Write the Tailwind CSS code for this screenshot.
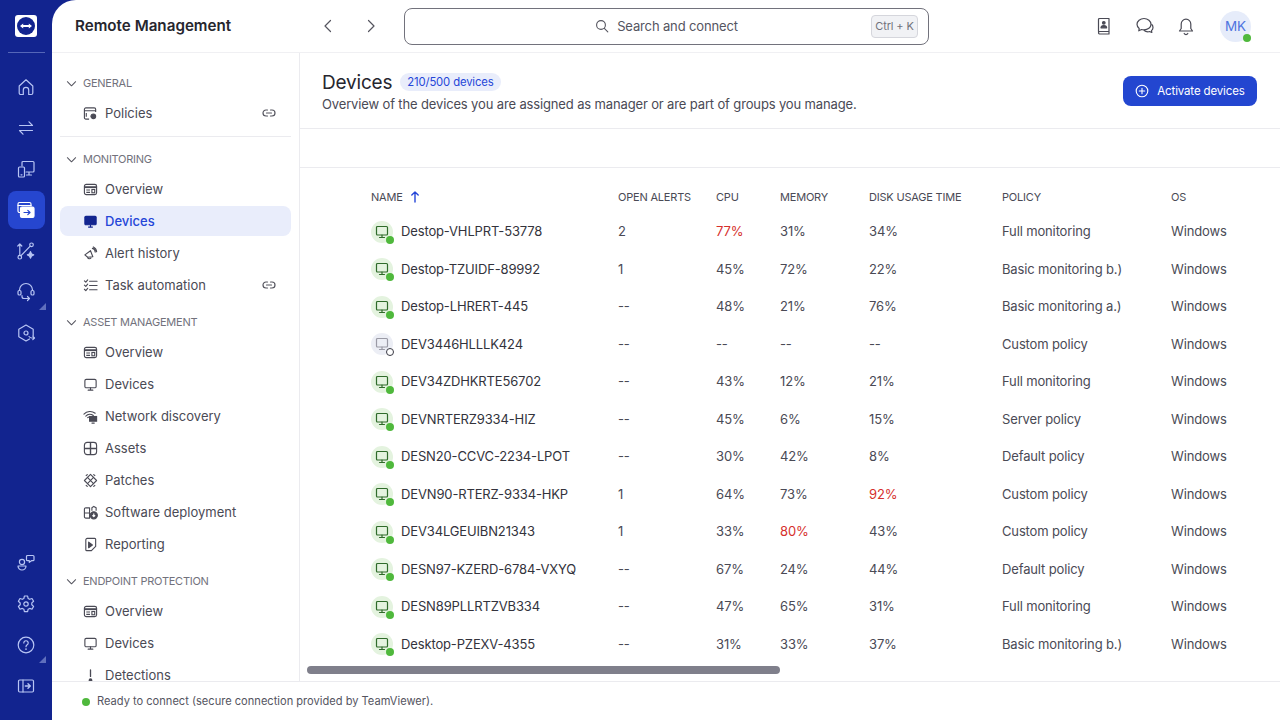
<!DOCTYPE html>
<html lang="en">
<head>
    <meta charset="UTF-8">
    <meta name="viewport" content="width=device-width, initial-scale=1.0">
    <title>Remote Management - Devices</title>
    <script src="https://cdn.jsdelivr.net/npm/@tailwindcss/browser@4"></script>
</head>
<body class="bg-[#12248f] h-screen overflow-hidden flex font-[Inter,sans-serif] text-[13px] tracking-[-0.14px] text-[#4a4a55]">

    <!-- icon rail -->
    <nav class="w-[52px] shrink-0 h-full flex flex-col items-center pt-[15px] pb-[15px] text-[#b8c5f4]">
        <div class="w-[22px] h-[22px] bg-white rounded-[3px] flex items-center justify-center">
            <svg width="18" height="18" viewBox="0 0 18 18"><circle cx="9" cy="9" r="9" fill="#12248f"/><path d="M3 9l3.2-2.6v1.7h5.6V6.4L15 9l-3.2 2.6V9.9H6.2v1.7z" fill="#fff"/></svg>
        </div>
        <div class="w-[37px] h-px bg-[#5566b8] mt-[15px] mb-[15px]"></div>
        <div class="flex flex-col gap-[3px]">
            <a class="w-[37px] h-[38px] flex items-center justify-center">
                <svg width="20" height="20" viewBox="0 0 20 20" fill="none" stroke="currentColor" stroke-width="1.2" stroke-linejoin="round"><path d="M3.2 9 10 2.8 16.8 9v7a1.5 1.5 0 0 1-1.5 1.5h-2.6V13a2.7 2.7 0 0 0-5.4 0v4.5H4.7A1.5 1.5 0 0 1 3.2 16z"/></svg>
            </a>
            <a class="w-[37px] h-[38px] flex items-center justify-center">
                <svg width="20" height="20" viewBox="0 0 20 20" fill="none" stroke="currentColor" stroke-width="1.2" stroke-linecap="round" stroke-linejoin="round"><path d="M3.5 7.5h13L13 3.8M16.5 12.5h-13L7 16.2"/></svg>
            </a>
            <a class="w-[37px] h-[38px] flex items-center justify-center">
                <svg width="20" height="20" viewBox="0 0 20 20" fill="none" stroke="currentColor" stroke-width="1.2" stroke-linecap="round" stroke-linejoin="round"><path d="M6 7V3.5a1 1 0 0 1 1-1h10a1 1 0 0 1 1 1V12a1 1 0 0 1-1 1h-7M13 13v3M10.5 16h5"/><rect x="2.5" y="8" width="6" height="10" rx="1"/><path d="M5 15.800h1"/></svg>
            </a>
            <a class="w-[37px] h-[38px] flex items-center justify-center bg-[#2646cf] rounded-lg text-white">
                <svg width="20" height="20" viewBox="0 0 20 20" fill="none" stroke="currentColor" stroke-width="1.2" stroke-linecap="round" stroke-linejoin="round"><path d="M4 12.5h-.5A1.5 1.5 0 0 1 2 11V4a1.5 1.5 0 0 1 1.500-1.500h10A1.5 1.5 0 0 1 15 4v2"/><path d="M2 5.5h13"/><rect x="4.5" y="7" width="13.5" height="10.5" rx="1.5" fill="currentColor"/><path d="M8 12.5h6M11.8 10.3l2.2 2.2-2.2 2.2" stroke="#2646cf"/></svg>
            </a>
            <a class="w-[37px] h-[38px] flex items-center justify-center">
                <svg width="20" height="20" viewBox="0 0 20 20" fill="none" stroke="currentColor" stroke-width="1.2" stroke-linecap="round" stroke-linejoin="round"><circle cx="3.8" cy="16.2" r="1.8"/><circle cx="15.5" cy="3.8" r="1.8"/><path d="M5 14.7 14.2 5.2M3.8 14V3M1.8 5l2-2 2 2"/><path d="M14.5 10.5c.4 2.3 1 2.9 3.2 3.300-2.200.4-2.800 1-3.200 3.300-.4-2.300-1-2.900-3.200-3.300 2.200-.4 2.800-1 3.200-3.300z" fill="currentColor"/></svg>
            </a>
            <a class="relative w-[37px] h-[38px] flex items-center justify-center">
                <svg width="20" height="20" viewBox="0 0 20 20" fill="none" stroke="currentColor" stroke-width="1.2" stroke-linecap="round" stroke-linejoin="round"><path d="M3.5 8.5V8a6.5 6.5 0 0 1 13 0v.5"/><rect x="2" y="8.5" width="3" height="4.5" rx="1.3"/><rect x="15" y="8.5" width="3" height="4.5" rx="1.3"/><path d="M6 13.5v1a2 2 0 0 0 2 2h5.500M11.500 14.500l2 2-2 2"/></svg>
                <span class="absolute right-[-1px] bottom-[1px] w-0 h-0 border-l-[7px] border-l-transparent border-b-[7px] border-b-[#5f6fbd]"></span>
            </a>
            <a class="w-[37px] h-[38px] flex items-center justify-center">
                <svg width="20" height="20" viewBox="0 0 20 20" fill="none" stroke="currentColor" stroke-width="1.2" stroke-linecap="round" stroke-linejoin="round"><path d="M17.2 12.5V6.2L10 2 2.8 6.2v7.6L10 18l3.500-2"/><circle cx="10" cy="10" r="2"/><path d="M13 13.5c.8 1 1.700 1.500 2.800 1.500H18M16.800 13.200 18.500 15l-1.700 1.600"/></svg>
            </a>
        </div>
        <div class="mt-auto flex flex-col gap-[3px]">
            <a class="w-[37px] h-[38px] flex items-center justify-center">
                <svg width="20" height="20" viewBox="0 0 20 20" fill="none" stroke="currentColor" stroke-width="1.2" stroke-linecap="round" stroke-linejoin="round"><circle cx="6" cy="9" r="2.6"/><path d="M2 13h8a4 4 0 0 1-8 0z"/><path d="M10.5 3.5a1 1 0 0 1 1-1H17a1 1 0 0 1 1 1v3.2a1 1 0 0 1-1 1h-1.500l-2.200 1.600V7.700h-1.800a1 1 0 0 1-1-1z"/></svg>
            </a>
            <a class="w-[37px] h-[38px] flex items-center justify-center">
                <svg width="20" height="20" viewBox="0 0 20 20" fill="none" stroke="currentColor" stroke-width="1.2" stroke-linejoin="round"><path d="M8.4 2h3.2l.5 2.4 1.6.9 2.300-.8 1.600 2.800-1.800 1.600v1.900l1.800 1.600-1.600 2.800-2.300-.8-1.600.9-.5 2.400H8.400l-.5-2.400-1.600-.9-2.300.8-1.600-2.800 1.800-1.600V9L2.400 7.300 4 4.500l2.300.8 1.600-.9z"/><circle cx="10" cy="10" r="2.2"/></svg>
            </a>
            <a class="relative w-[37px] h-[38px] flex items-center justify-center">
                <svg width="20" height="20" viewBox="0 0 20 20" fill="none" stroke="currentColor" stroke-width="1.2" stroke-linecap="round"><circle cx="10" cy="10" r="7.8"/><path d="M7.8 7.900a2.200 2.200 0 1 1 3.400 1.900c-.8.5-1.200 1-1.200 1.900"/><path d="M10 14.100v.1" stroke-width="1.6"/></svg>
                <span class="absolute right-[-1px] bottom-[1px] w-0 h-0 border-l-[7px] border-l-transparent border-b-[7px] border-b-[#5f6fbd]"></span>
            </a>
            <a class="w-[37px] h-[38px] flex items-center justify-center">
                <svg width="20" height="20" viewBox="0 0 20 20" fill="none" stroke="currentColor" stroke-width="1.2" stroke-linecap="round" stroke-linejoin="round"><rect x="2.5" y="4" width="15" height="12" rx="1.2"/><path d="M7 4v12"/><path d="M9.3 10h5M12 7.800l2.300 2.200-2.300 2.200" stroke-width="1.4"/></svg>
            </a>
        </div>
    </nav>

    <div class="flex-1 min-w-0 h-full flex flex-col bg-white rounded-tl-[24px]">

        <!-- top bar -->
        <header class="h-[53px] shrink-0 flex items-center border-b border-[#f0f0f3]">
            <div class="w-[248px] shrink-0 pl-[23px] text-[15.2px] tracking-normal font-semibold text-[#26262e]">Remote Management</div>
            <button class="w-[56px] flex justify-center">
                <svg width="16" height="16" viewBox="0 0 16 16" fill="none" stroke="#55555f" stroke-width="1.2" stroke-linecap="round" stroke-linejoin="round"><path d="M10.5 2.5 5 8l5.500 5.500"/></svg>
            </button>
            <button class="w-[30px] flex justify-center">
                <svg width="16" height="16" viewBox="0 0 16 16" fill="none" stroke="#55555f" stroke-width="1.2" stroke-linecap="round" stroke-linejoin="round"><path d="M5.5 2.5 11 8l-5.500 5.500"/></svg>
            </button>
            <div class="relative ml-[18px] w-[525px] h-[37px] border border-[#72727c] rounded-lg flex items-center justify-center gap-[8px] text-[#55555f]">
                <svg width="14" height="14" viewBox="0 0 14 14" fill="none" stroke="#55555f" stroke-width="1.1" stroke-linecap="round"><circle cx="6" cy="6" r="4.4"/><path d="M9.3 9.3 12.8 12.8"/></svg>
                <span class="pt-[2px]">Search and connect</span>
                <span class="absolute right-[10px] top-[6px] w-[47px] h-[23px] bg-[#f1f2f5] border border-[#d5d6dc] rounded flex items-center justify-center text-[11px] text-[#72727c]">Ctrl + K</span>
            </div>
            <div class="ml-auto flex items-center mr-[29px]">
                <svg class="mr-[21px]" width="20" height="20" viewBox="0 0 20 20" fill="none" stroke="#4a4a55" stroke-width="1.2" stroke-linecap="round" stroke-linejoin="round"><path d="M4.5 15.5v-12a1 1 0 0 1 1-1H15v15.500H5.700a1.200 1.200 0 0 1-1.200-1.200 1.300 1.300 0 0 1 1.200-1.300H15"/><circle cx="9.8" cy="6.8" r="1.3" fill="#4a4a55"/><path d="M7 11.800c0-1.500 1.200-2.300 2.800-2.300s2.800.8 2.800 2.300z" fill="#4a4a55"/></svg>
                <svg class="mr-[21px]" width="20" height="20" viewBox="0 0 20 20" fill="none" stroke="#4a4a55" stroke-width="1.2" stroke-linecap="round" stroke-linejoin="round"><path d="M9 2.5c-3.800 0-7 2.500-7 5.800 0 1.700.9 3.200 2.200 4.200l-.4 2.300 2.800-1.300c.8.3 1.600.4 2.400.4 3.800 0 7-2.400 7-5.600S12.800 2.500 9 2.500z"/><path d="M16.800 8.500c.8.8 1.200 1.800 1.200 2.900 0 1.300-.6 2.400-1.500 3.200l.3 1.900-2.200-1c-.6.2-1.200.3-1.800.3-1.400 0-2.700-.5-3.500-1.300"/></svg>
                <svg class="mr-[24px]" width="20" height="20" viewBox="0 0 20 20" fill="none" stroke="#4a4a55" stroke-width="1.2" stroke-linecap="round" stroke-linejoin="round"><path d="M3.5 15h13l-1.700-2.500V8a4.800 4.800 0 0 0-9.600 0v4.500z"/><path d="M8.200 17.500a2 2 0 0 0 3.600 0"/></svg>
                <div class="relative w-[31px] h-[31px] rounded-full bg-[#e6ecfa] text-[#4f74e0] text-[13.5px] flex items-center justify-center">MK
                    <span class="absolute right-[0px] bottom-[0px] w-[8px] h-[8px] rounded-full bg-[#4fb83c]"></span>
                </div>
            </div>
        </header>

        <div class="flex-1 min-h-0 flex">

            <!-- section sidebar -->
            <aside class="w-[248px] shrink-0 overflow-hidden border-r border-[#ebebef] pt-[18px] px-[8px] tracking-normal">
                <div class="h-[24px] mb-[2px] flex items-center pl-[6px] gap-[6px] text-[11px] tracking-[-0.25px] text-[#72727c]">
                    <svg width="11" height="11" viewBox="0 0 12 12" fill="none" stroke="#55555f" stroke-width="1.1" stroke-linecap="round" stroke-linejoin="round"><path d="M1.5 4 6 8.500 10.500 4"/></svg>GENERAL
                </div>
                <a class="h-[32px] flex items-center pl-[23px] gap-[7px]">
                    <svg width="15" height="15" viewBox="0 0 16 16" fill="none" stroke="#4a4a55" stroke-width="1.2" stroke-linejoin="round"><path d="M6.5 14H3a1.500 1.500 0 0 1-1.500-1.500v-9A1.500 1.500 0 0 1 3 2h9a1.500 1.500 0 0 1 1.500 1.500v3M1.500 5h12"/><circle cx="11" cy="11" r="2.5" fill="#4a4a55"/><path d="M3.500 7.500v4"/></svg>
                    <span class="pt-[2px]">Policies</span>
                    <svg class="ml-auto mr-[15px]" width="14" height="14" viewBox="0 0 14 14" fill="none" stroke="#55555f" stroke-width="1.2" stroke-linecap="round"><path d="M5.5 4H4a3 3 0 0 0 0 6h1.500M8.500 4H10a3 3 0 0 1 0 6H8.500M4.500 7h5"/></svg>
                </a>
                <div class="border-t border-[#ebebef] mt-[7px] mb-[10px]"></div>
                <div class="h-[24px] mb-[3px] flex items-center pl-[6px] gap-[6px] text-[11px] tracking-[-0.25px] text-[#72727c]">
                    <svg width="11" height="11" viewBox="0 0 12 12" fill="none" stroke="#55555f" stroke-width="1.1" stroke-linecap="round" stroke-linejoin="round"><path d="M1.5 4 6 8.500 10.500 4"/></svg>MONITORING
                </div>
                <a class="h-[30px] mb-[2px] flex items-center pl-[23px] gap-[7px]">
                    <svg width="15" height="15" viewBox="0 0 16 16" fill="none" stroke="#4a4a55" stroke-width="1.2"><rect x="1.5" y="2.5" width="13" height="11" rx="2"/><path d="M1.5 5.500h13" stroke-width="2"/><path d="M3.500 8.500h4M3.500 11h4"/><rect x="9.5" y="8" width="3" height="3.5"/></svg>
                    <span class="pt-[2px]">Overview</span>
                </a>
                <a class="h-[30px] mb-[2px] flex items-center pl-[23px] gap-[7px] bg-[#e9edfb] rounded-lg text-[#2546d8] font-medium">
                    <svg width="15" height="15" viewBox="0 0 16 16" fill="#12248f" stroke="#12248f" stroke-width="1.2" stroke-linejoin="round"><rect x="2" y="2.5" width="12" height="9" rx="1"/><path d="M5.500 14h5M8 11.500V14" fill="none"/></svg>
                    <span class="pt-[2px]">Devices</span>
                </a>
                <a class="h-[30px] mb-[2px] flex items-center pl-[23px] gap-[7px]">
                    <svg width="15" height="15" viewBox="0 0 16 16" fill="none" stroke="#4a4a55" stroke-width="1.2" stroke-linecap="round" stroke-linejoin="round"><path d="M2 9.500 8 5l2.500 6.500-5.500.5z"/><path d="M5 12.500a2 2 0 0 0 3.500.2M10 2.500a4 4 0 0 1 3 4M11 1a6 6 0 0 1 3.500 5"/></svg>
                    <span class="pt-[2px]">Alert history</span>
                </a>
                <a class="h-[30px] mb-[10px] flex items-center pl-[23px] gap-[7px]">
                    <svg width="15" height="15" viewBox="0 0 16 16" fill="none" stroke="#4a4a55" stroke-width="1.2" stroke-linecap="round" stroke-linejoin="round"><path d="M7 3.500h8M7 8h8M7 12.500h8M1.500 3 3 4.500 5 2M1.500 7.500 3 9l2-2.500M1.500 12 3 13.500 5 11"/></svg>
                    <span class="pt-[2px]">Task automation</span>
                    <svg class="ml-auto mr-[15px]" width="14" height="14" viewBox="0 0 14 14" fill="none" stroke="#55555f" stroke-width="1.2" stroke-linecap="round"><path d="M5.5 4H4a3 3 0 0 0 0 6h1.500M8.500 4H10a3 3 0 0 1 0 6H8.500M4.500 7h5"/></svg>
                </a>
                <div class="h-[24px] mb-[2px] flex items-center pl-[6px] gap-[6px] text-[11px] tracking-[-0.25px] text-[#72727c]">
                    <svg width="11" height="11" viewBox="0 0 12 12" fill="none" stroke="#55555f" stroke-width="1.1" stroke-linecap="round" stroke-linejoin="round"><path d="M1.5 4 6 8.500 10.500 4"/></svg>ASSET MANAGEMENT
                </div>
                <a class="h-[32px] flex items-center pl-[23px] gap-[7px]">
                    <svg width="15" height="15" viewBox="0 0 16 16" fill="none" stroke="#4a4a55" stroke-width="1.2"><rect x="1.5" y="2.5" width="13" height="11" rx="2"/><path d="M1.500 5.500h13" stroke-width="2"/><path d="M3.500 8.500h4M3.500 11h4"/><rect x="9.5" y="8" width="3" height="3.5"/></svg>
                    <span class="pt-[2px]">Overview</span>
                </a>
                <a class="h-[32px] flex items-center pl-[23px] gap-[7px]">
                    <svg width="15" height="15" viewBox="0 0 16 16" fill="none" stroke="#4a4a55" stroke-width="1.2" stroke-linejoin="round" stroke-linecap="round"><rect x="2" y="2.5" width="12" height="9" rx="1.5"/><path d="M5.500 14h5M8 11.500V14"/></svg>
                    <span class="pt-[2px]">Devices</span>
                </a>
                <a class="h-[32px] flex items-center pl-[23px] gap-[7px]">
                    <svg width="15" height="15" viewBox="0 0 16 16" fill="none" stroke="#4a4a55" stroke-width="1.2" stroke-linecap="round"><path d="M1 5.500a9 9 0 0 1 12-1M3 7.500a6 6 0 0 1 8-.5M5 9.300a3 3 0 0 1 1.500-.8"/><rect x="7" y="8" width="7.5" height="5" fill="#4a4a55"/><path d="M9.500 15H12"/></svg>
                    <span class="pt-[2px]">Network discovery</span>
                </a>
                <a class="h-[32px] flex items-center pl-[23px] gap-[7px]">
                    <svg width="15" height="15" viewBox="0 0 16 16" fill="none" stroke="#4a4a55" stroke-width="1.2"><rect x="1.5" y="1.5" width="13" height="13" rx="3"/><path d="M8 1.500v13M1.500 8h13" stroke-width="1.5"/></svg>
                    <span class="pt-[2px]">Assets</span>
                </a>
                <a class="h-[32px] flex items-center pl-[23px] gap-[7px]">
                    <svg width="15" height="15" viewBox="0 0 16 16" fill="none" stroke="#4a4a55" stroke-width="1.2" stroke-linejoin="round"><path d="M8 1.500 14.500 8 8 14.500 1.500 8z"/><path d="M4.500 4.500l7 7M11.500 4.500l-7 7M3 3l2-1.500M13 3l-2-1.500M3 13l2 1.500M13 13l-2 1.500"/></svg>
                    <span class="pt-[2px]">Patches</span>
                </a>
                <a class="h-[32px] flex items-center pl-[23px] gap-[7px]">
                    <svg width="15" height="15" viewBox="0 0 16 16" fill="none" stroke="#4a4a55" stroke-width="1.2" stroke-linejoin="round"><path d="M7 14H3a1.500 1.500 0 0 1-1.500-1.500v-8A1.500 1.500 0 0 1 3 3h4v11zM1.500 8.500H7"/><path d="M9.500 6V3l2-1.500L14 3v3"/><circle cx="11.5" cy="11" r="3.8" fill="#4a4a55"/><path d="M11.500 9v3.500M10 11l1.500 1.500L13 11" stroke="#fff"/></svg>
                    <span class="pt-[2px]">Software deployment</span>
                </a>
                <a class="h-[32px] mb-[9px] flex items-center pl-[23px] gap-[7px]">
                    <svg width="15" height="15" viewBox="0 0 16 16" fill="none" stroke="#4a4a55" stroke-width="1.2" stroke-linejoin="round"><path d="M4.500 1.500h8a1 1 0 0 1 1 1V10L9 14.500H4a1 1 0 0 1-1-1V3a1.500 1.500 0 0 1 1.500-1.500z"/><path d="M6 5.500v6l4-3z" fill="#4a4a55"/></svg>
                    <span class="pt-[2px]">Reporting</span>
                </a>
                <div class="h-[24px] mb-[2px] flex items-center pl-[6px] gap-[6px] text-[11px] tracking-[-0.25px] text-[#72727c]">
                    <svg width="11" height="11" viewBox="0 0 12 12" fill="none" stroke="#55555f" stroke-width="1.1" stroke-linecap="round" stroke-linejoin="round"><path d="M1.5 4 6 8.500 10.500 4"/></svg>ENDPOINT PROTECTION
                </div>
                <a class="h-[32px] flex items-center pl-[23px] gap-[7px]">
                    <svg width="15" height="15" viewBox="0 0 16 16" fill="none" stroke="#4a4a55" stroke-width="1.2"><rect x="1.5" y="2.5" width="13" height="11" rx="2"/><path d="M1.500 5.500h13" stroke-width="2"/><path d="M3.500 8.500h4M3.500 11h4"/><rect x="9.5" y="8" width="3" height="3.5"/></svg>
                    <span class="pt-[2px]">Overview</span>
                </a>
                <a class="h-[32px] flex items-center pl-[23px] gap-[7px]">
                    <svg width="15" height="15" viewBox="0 0 16 16" fill="none" stroke="#4a4a55" stroke-width="1.2" stroke-linejoin="round" stroke-linecap="round"><rect x="2" y="2.5" width="12" height="9" rx="1.5"/><path d="M5.500 14h5M8 11.500V14"/></svg>
                    <span class="pt-[2px]">Devices</span>
                </a>
                <a class="h-[32px] flex items-center pl-[23px] gap-[7px]">
                    <svg width="15" height="15" viewBox="0 0 16 16" fill="none" stroke="#4a4a55" stroke-width="1.4" stroke-linecap="round"><path d="M8 2v7"/><circle cx="8" cy="13" r="1.3" fill="#4a4a55"/></svg>
                    <span class="pt-[2px]">Detections</span>
                </a>
            </aside>

            <!-- devices content -->
            <main class="flex-1 min-w-0 overflow-hidden">
                <div class="h-[76px] border-b border-[#ebebef] pl-[22px] pr-[23px] pt-[17px] flex justify-between">
                    <div>
                        <div class="flex items-center gap-[8px] h-[24px]">
                            <h1 class="pt-[2px] text-[19px] tracking-[-0.2px] text-[#26262e]">Devices</h1>
                            <span class="h-[18px] px-[7px] rounded-full bg-[#e9edfb] text-[#2546d8] text-[11.3px] flex items-center">210/500 devices</span>
                        </div>
                        <p class="leading-[20px]">Overview of the devices you are assigned as manager or are part of groups you manage.</p>
                    </div>
                    <button class="mt-[6px] w-[134px] h-[30px] bg-[#2346d0] rounded-lg text-white text-[11.5px] flex items-center justify-center gap-[8px]">
                        <svg width="14" height="14" viewBox="0 0 14 14" fill="none" stroke="#fff" stroke-width="1.1" stroke-linecap="round"><circle cx="7" cy="7" r="5.8"/><path d="M7 4.300v5.400M4.300 7h5.400"/></svg>
                        <span class="pt-[2px]">Activate devices</span>
                    </button>
                </div>
                <div class="h-[39px] border-b border-[#ebebef]"></div>

                <div class="pl-[71px] pt-[15px]">
                    <div class="grid grid-cols-[247px_98px_64px_89px_133px_169px_80px] items-center h-[30px] pb-[2px] text-[11px] tracking-[-0.2px]">
                        <div class="flex items-center gap-[7px]">NAME
                            <svg width="10" height="12" viewBox="0 0 10 12" fill="none" stroke="#2546d8" stroke-width="1.4" stroke-linecap="round" stroke-linejoin="round"><path d="M5 11V1M1.800 4 5 1l3.200 3"/></svg>
                        </div>
                        <div>OPEN ALERTS</div><div>CPU</div><div>MEMORY</div><div>DISK USAGE TIME</div><div>POLICY</div><div>OS</div>
                    </div>
                    <div id="device-rows"></div>
                </div>
                <div class="ml-[7px] mt-[3px] w-[473px] h-[8px] rounded-full bg-[#7f7f8b]"></div>
            </main>
        </div>

        <footer class="h-[39px] shrink-0 border-t border-[#ebebef] flex items-center pl-[30px] pt-[1px] gap-[7px] text-[11.1px] tracking-normal text-[#55555f]">
            <span class="w-[8px] h-[8px] rounded-full bg-[#4fb83c]"></span>
            Ready to connect (secure connection provided by TeamViewer).
        </footer>
    </div>

    <script>
        const devices = [
            ['Destop-VHLPRT-53778', '2', '77%', '31%', '34%', 'Full monitoring', 'cpu'],
            ['Destop-TZUIDF-89992', '1', '45%', '72%', '22%', 'Basic monitoring b.)'],
            ['Destop-LHRERT-445', '--', '48%', '21%', '76%', 'Basic monitoring a.)'],
            ['DEV3446HLLLK424', '--', '--', '--', '--', 'Custom policy', 'offline'],
            ['DEV34ZDHKRTE56702', '--', '43%', '12%', '21%', 'Full monitoring'],
            ['DEVNRTERZ9334-HIZ', '--', '45%', '6%', '15%', 'Server policy'],
            ['DESN20-CCVC-2234-LPOT', '--', '30%', '42%', '8%', 'Default policy'],
            ['DEVN90-RTERZ-9334-HKP', '1', '64%', '73%', '92%', 'Custom policy', 'disk'],
            ['DEV34LGEUIBN21343', '1', '33%', '80%', '43%', 'Custom policy', 'memory'],
            ['DESN97-KZERD-6784-VXYQ', '--', '67%', '24%', '44%', 'Default policy'],
            ['DESN89PLLRTZVB334', '--', '47%', '65%', '31%', 'Full monitoring'],
            ['Desktop-PZEXV-4355', '--', '31%', '33%', '37%', 'Basic monitoring b.)'],
        ];

        const red = 'text-[#d6302c]';

        document.getElementById('device-rows').innerHTML = devices.map(function(d) {
            const offline = d[6] === 'offline';
            const circle = offline ? 'bg-[#eceef5]' : 'bg-[#e4f3df]';
            const stroke = offline ? '#9a9aa5' : '#2f6b2a';
            const dot = offline ? 'bg-white border border-[#3a3a44]' : 'bg-[#4fb83c]';
            return `
                <div class="grid grid-cols-[247px_98px_64px_89px_133px_169px_80px] items-center h-[37.5px]">
                    <div class="flex items-center gap-[8px] text-[#33333c]">
                        <span class="relative w-[22px] h-[22px] rounded-full ${circle} flex items-center justify-center">
                            <svg width="14" height="14" viewBox="0 0 14 14" fill="none" stroke="${stroke}" stroke-width="1.2" stroke-linejoin="round" stroke-linecap="round"><rect x="1.5" y="1.5" width="11" height="8.5" rx="1"/><path d="M4.5 12.5h5M7 10v2.5"/></svg>
                            <span class="absolute right-[-1px] bottom-[-1px] w-[8px] h-[8px] rounded-full ${dot}"></span>
                        </span>
                        ${d[0]}
                    </div>
                    <div>${d[1]}</div>
                    <div class="${d[6] === 'cpu' ? red : ''}">${d[2]}</div>
                    <div class="${d[6] === 'memory' ? red : ''}">${d[3]}</div>
                    <div class="${d[6] === 'disk' ? red : ''}">${d[4]}</div>
                    <div>${d[5]}</div>
                    <div>Windows</div>
                </div>`;
        }).join('');
    </script>
</body>
</html>
